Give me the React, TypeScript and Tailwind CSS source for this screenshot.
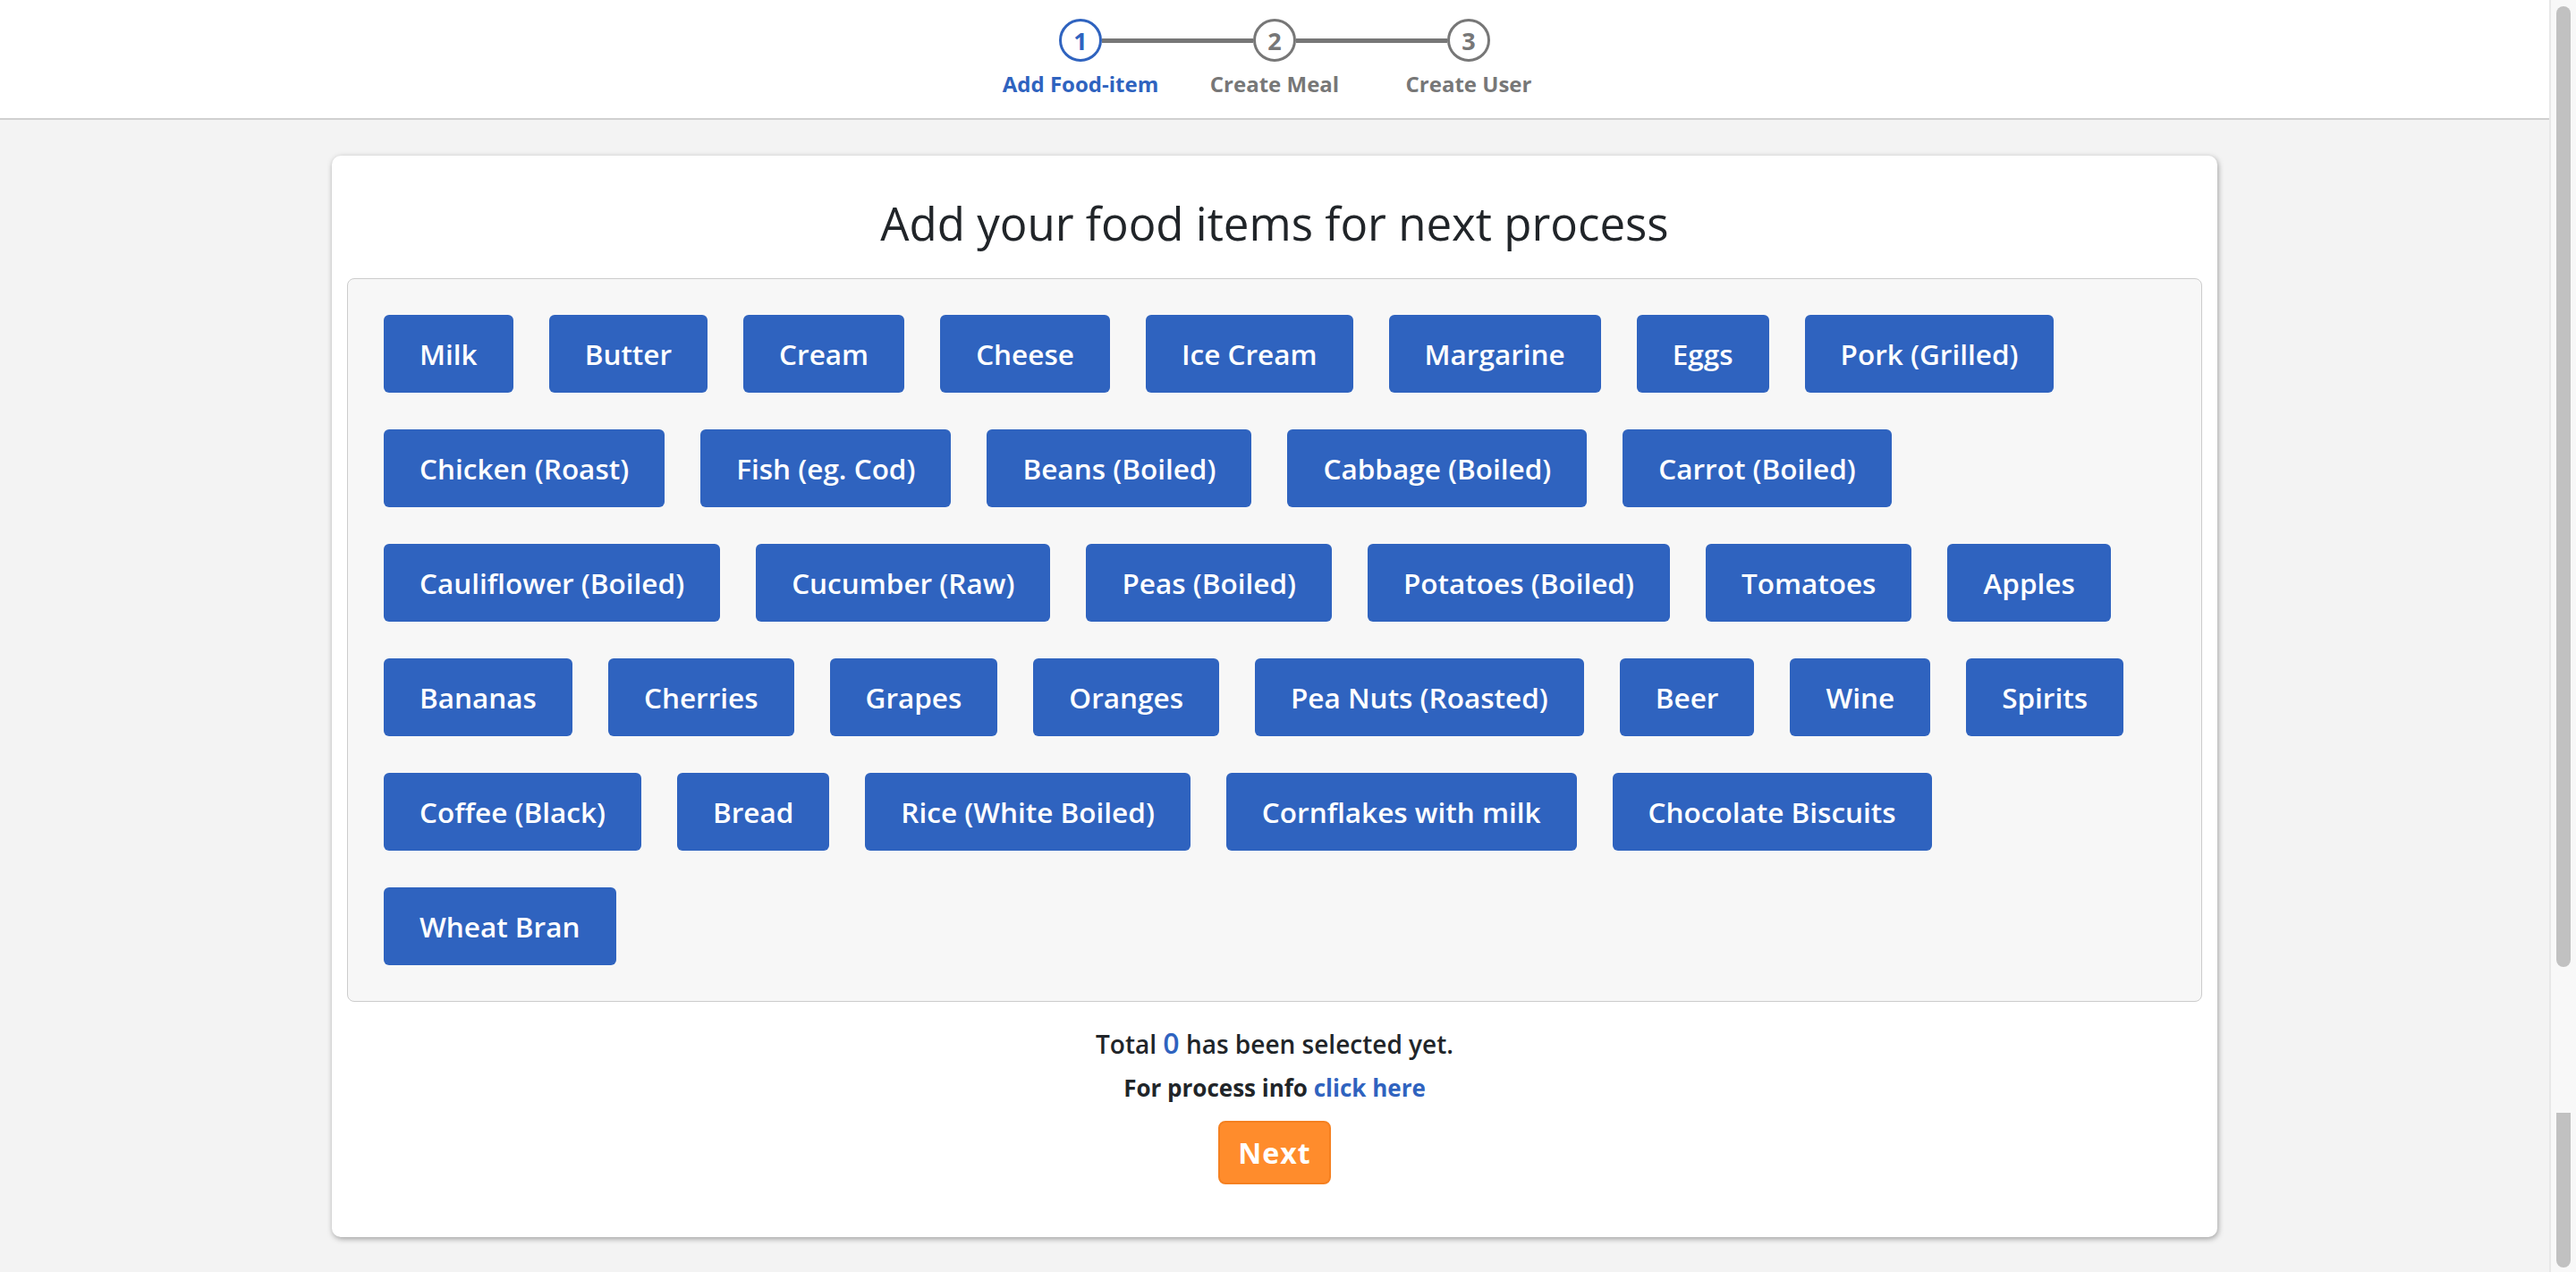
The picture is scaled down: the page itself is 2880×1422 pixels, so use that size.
import { useState } from "react"

const foodItems = [
    "Milk", "Butter", "Cream", "Cheese", "Ice Cream", "Margarine", "Eggs", "Pork (Grilled)",
    "Chicken (Roast)", "Fish (eg. Cod)", "Beans (Boiled)", "Cabbage (Boiled)", "Carrot (Boiled)",
    "Cauliflower (Boiled)", "Cucumber (Raw)", "Peas (Boiled)", "Potatoes (Boiled)", "Tomatoes", "Apples",
    "Bananas", "Cherries", "Grapes", "Oranges", "Pea Nuts (Roasted)", "Beer", "Wine", "Spirits",
    "Coffee (Black)", "Bread", "Rice (White Boiled)", "Cornflakes with milk", "Chocolate Biscuits",
    "Wheat Bran",
]

const steps = [
    { num: 1, label: "Add Food-item" },
    { num: 2, label: "Create Meal" },
    { num: 3, label: "Create User" },
]

function Stepper({ active }: { active: number }) {
    return (
        <div className="flex flex-col items-center pt-[21px] pb-[23px]">
            <div className="flex items-center">
                {steps.map((s, i) => (
                    <div key={s.num} className="flex items-center">
                        {i > 0 && <div className="w-[169px] h-[5px] bg-[#777777]" />}
                        <div
                            className={
                                s.num === active
                                    ? "w-[48px] h-[48px] rounded-full border-[3px] border-[#2f63bf] text-[#2f63bf] flex items-center justify-center text-[27px] font-bold leading-none"
                                    : "w-[48px] h-[48px] rounded-full border-[3px] border-[#777777] text-[#777777] flex items-center justify-center text-[27px] font-bold leading-none"
                            }
                        >
                            {s.num}
                        </div>
                    </div>
                ))}
            </div>
            <div className="flex mt-[10px]">
                {steps.map((s) => (
                    <div
                        key={s.num}
                        className={
                            s.num === active
                                ? "w-[217px] text-center text-[24px] leading-[30px] font-bold text-[#2f63bf]"
                                : "w-[217px] text-center text-[24px] leading-[30px] font-bold text-[#777777]"
                        }
                    >
                        {s.label}
                    </div>
                ))}
            </div>
        </div>
    )
}

export default function App() {
    const [selected, setSelected] = useState<string[]>([])

    const toggle = (item: string) => {
        setSelected((prev) => (prev.includes(item) ? prev.filter((x) => x !== item) : [...prev, item]))
    }

    return (
        <div className="flex h-screen overflow-hidden font-['Open_Sans',sans-serif] text-[#212529]">
            <div className="flex-1 flex flex-col bg-[#f3f3f3]">
                <header className="bg-white border-b-2 border-[#d0d0d0]">
                    <Stepper active={1} />
                </header>

                <div className="flex justify-center pt-[40px]">
                    <div className="w-[2108px] bg-white rounded-[10px] shadow-[1px_2px_6px_rgba(0,0,0,0.35)] px-[17px] pt-[40px] pb-[59px] flex flex-col items-center">
                        <h1 className="text-[51px] leading-[70px] font-normal">Add your food items for next process</h1>

                        <div className="mt-[27px] w-full bg-[#f7f7f7] border border-[#cccccc] rounded-[8px] p-[40px]">
                            <div className="flex flex-wrap gap-x-[40px] gap-y-[41px]">
                                {foodItems.map((item) => (
                                    <button
                                        key={item}
                                        onClick={() => toggle(item)}
                                        className={
                                            selected.includes(item)
                                                ? "h-[87px] px-[40px] rounded-[6px] bg-[#f57f17] text-white text-[31.5px] font-semibold"
                                                : "h-[87px] px-[40px] rounded-[6px] bg-[#2f63bf] text-white text-[31.5px] font-semibold"
                                        }
                                    >
                                        {item}
                                    </button>
                                ))}
                            </div>
                        </div>

                        <p className="mt-[24px] text-[28px] leading-[44px] font-semibold">
                            Total <span className="text-[32px] text-[#2f63bf]">{selected.length}</span> has been selected yet.
                        </p>
                        <p className="mt-[5px] text-[26px] leading-[44px] font-bold">
                            For process info <a href="#" className="text-[#2f63bf]">click here</a>
                        </p>
                        <button className="mt-[15px] w-[126px] h-[71px] rounded-[8px] bg-[#ff8c2c] border-2 border-[#f58020] text-white text-[32px] font-bold tracking-[1px]">
                            Next
                        </button>
                    </div>
                </div>
            </div>

            {/* scrollbar */}
            <div className="w-[30px] bg-[#f8f8f8] border-l-2 border-[#e8e8e8] flex flex-col items-center pt-[7px]">
                <div className="w-[16px] h-[1074px] rounded-full bg-[#c1c1c1]" />
                <div className="mt-[163px] w-[16px] h-[173px] rounded-b-full bg-[#c1c1c1]" />
            </div>
        </div>
    )
}
